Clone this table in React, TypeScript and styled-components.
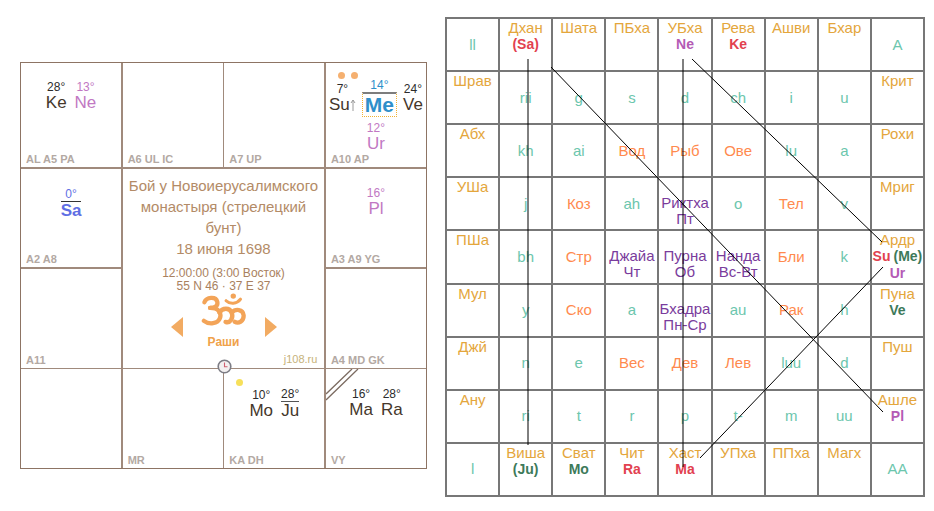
import React from "react";
import styled, { createGlobalStyle } from "styled-components";

const GlobalStyle = createGlobalStyle`
  body {
    margin: 0;
    background: #fff;
    font-family: "Liberation Sans", Arial, sans-serif;
  }
`;

const DARK = "#45372b";
const PINK_L = "#c178c3";
const BLUE_SA = "#5f6fe4";
const BLUE_ME = "#2f8fca";

const RED = "#e2414f";
const GREEN = "#3d7a5a";
const PINK = "#b45bb5";

const TONES: Record<string, string> = {
  letter: "#6cc6ad",
  sign: "#ff8a4e",
  tithi: "#7a3c9c",
  corner: "#6cc6ad",
};

const Page = styled.div`
  display: flex;
  align-items: flex-start;
  gap: 18px;
  width: 934px;
  height: 511px;
  box-sizing: border-box;
  padding: 17px 0 0 20px;
`;

/* ---------- left chart ---------- */

const Chart = styled.div`
  position: relative;
  margin-top: 45px;
  width: 407px;
  height: 407px;
  box-sizing: border-box;
  display: grid;
  grid-template-columns: repeat(4, 1fr);
  grid-template-rows: repeat(4, 1fr);
  gap: 1.5px;
  border: 1.5px solid #8d7464;
  background: #a08a7c;
`;

const House = styled.div<{ $top?: number }>`
  position: relative;
  background: #fff;
  display: flex;
  flex-direction: column;
  align-items: center;
  padding: ${(p) => p.$top ?? 18}px 4px 2px;
  min-width: 0;
`;

const HouseLabel = styled.div`
  margin-top: auto;
  align-self: flex-start;
  font-size: 11px;
  line-height: 12px;
  font-weight: bold;
  color: #b3a9a3;
  white-space: nowrap;
  padding-left: 1px;
`;

const PlanetRow = styled.div<{ $gap?: number; $mt?: number }>`
  display: flex;
  align-items: center;
  gap: ${(p) => p.$gap ?? 8}px;
  margin-top: ${(p) => p.$mt ?? 0}px;
`;

const PlanetBox = styled.div`
  display: flex;
  flex-direction: column;
  align-items: center;
`;

const Deg = styled.span<{ $color: string }>`
  font-size: 12px;
  line-height: 13px;
  color: ${(p) => p.$color};
`;

const Name = styled.span<{ $color: string; $line?: string }>`
  display: flex;
  align-items: center;
  font-size: 17px;
  line-height: 18px;
  color: ${(p) => p.$color};
  border-top: ${(p) => (p.$line ? `1.5px solid ${p.$line}` : "none")};
`;

const BoldName = styled(Name)`
  font-weight: bold;
`;

const MeBox = styled.span`
  font-size: 21px;
  line-height: 22px;
  font-weight: bold;
  color: ${BLUE_ME};
  padding: 0 2px;
  border: 1.5px dotted #f2b233;
  border-top: 2px solid #7d7d7d;
`;

const Dots = styled.div`
  position: absolute;
  left: 12px;
  top: 9px;
  display: flex;
  gap: 6px;
`;

const Dot = styled.span<{ $color: string }>`
  width: 7px;
  height: 7px;
  border-radius: 50%;
  background: ${(p) => p.$color};
`;

const SunDot = styled(Dot)`
  position: absolute;
  left: 12px;
  top: 10px;
`;

const Slash = styled.svg`
  position: absolute;
  left: 0;
  top: 0;
`;

const ClockMark = styled.svg`
  position: absolute;
  left: 196px;
  top: 296px;
`;

const Center = styled.div`
  grid-column: 2 / span 2;
  grid-row: 2 / span 2;
  background: #fff;
  display: flex;
  flex-direction: column;
  align-items: center;
  padding: 6px 6px 3px;
  color: #b38b67;
  text-align: center;
`;

const Title = styled.div`
  font-size: 15px;
  line-height: 21.3px;
`;

const Meta = styled.div`
  margin-top: 7px;
  font-size: 12px;
  line-height: 13px;
  color: #a98160;
`;

const OmRow = styled.div`
  display: flex;
  align-items: flex-start;
  gap: 16px;
  height: 33px;
`;

const Arrowhead = styled.span<{ $dir: "left" | "right" }>`
  margin-top: 24px;
  width: 0;
  height: 0;
  border-top: 10px solid transparent;
  border-bottom: 10px solid transparent;
  ${(p) =>
    p.$dir === "left"
      ? "border-right: 12px solid #f2ab62;"
      : "border-left: 12px solid #f2ab62;"}
`;

const Rashi = styled.div`
  margin-top: 9px;
  font-size: 12px;
  line-height: 14px;
  font-weight: bold;
  color: #f0a24a;
`;

const Site = styled.div`
  margin-top: auto;
  align-self: flex-end;
  margin-right: 1px;
  font-size: 11px;
  line-height: 12px;
  color: #c6b27a;
`;

type PlanetProps = {
  deg: string;
  name: string;
  color?: string;
  degColor?: string;
  line?: string;
  bold?: boolean;
  rising?: boolean;
};

const Planet = ({ deg, name, color = DARK, degColor, line, bold, rising }: PlanetProps) => {
  const N = bold ? BoldName : Name;
  return (
    <PlanetBox>
      <Deg $color={degColor ?? (color === DARK ? "#2c2c2c" : color)}>{deg}</Deg>
      <N $color={color} $line={line}>
        {name}
        {rising && (
          <svg width="6" height="14" viewBox="0 0 6 14">
            <path d="M3 13V2M1 5l2-3 2 3" stroke="#9a9a9a" strokeWidth="1" fill="none" />
          </svg>
        )}
      </N>
    </PlanetBox>
  );
};

const Om = () => (
  <svg width="50" height="33" viewBox="0 0 48 32">
    <g fill="none" stroke="#f3a458" strokeWidth="4.2" strokeLinecap="round">
      <path d="M5 9C7 4 16 3 17.5 8.5C18.5 12.5 15 14.5 10.5 14.5" />
      <path d="M10.5 14.5C18.5 14.5 22 19 20 24.5C18 30 9.5 31 4.5 27" />
      <path d="M19.5 19C22.5 14 29.5 14 31.5 19C33.5 25 29.5 29.5 25.5 28" />
      <path d="M31.5 19C35 15 42.5 15.5 43 21.5C43.5 27.5 38 30 34.5 28" />
      <path d="M26 7.5C29.5 11 36.5 11 40 6" strokeWidth="3" />
    </g>
    <circle cx="33" cy="3" r="2.6" fill="#f3a458" />
  </svg>
);

/* ---------- right grid ---------- */

type Mark = { text: string; color: string };
type Cell =
  | { kind: "nak"; name: string; marks: Mark[][] }
  | { kind: "in"; tone: string; lines: string[] };

const m = (text: string, color: string): Mark => ({ text, color });
const nak = (name: string, ...marks: Mark[][]): Cell => ({ kind: "nak", name, marks });
const L = (s: string): Cell => ({ kind: "in", tone: "letter", lines: [s] });
const S = (s: string): Cell => ({ kind: "in", tone: "sign", lines: [s] });
const T = (a: string, b: string): Cell => ({ kind: "in", tone: "tithi", lines: [a, b] });
const C = (s: string): Cell => ({ kind: "in", tone: "corner", lines: [s] });

const rows: Cell[][] = [
  [C("ll"), nak("Дхан", [m("(Sa)", RED)]), nak("Шата"), nak("ПБха"), nak("УБха", [m("Ne", PINK)]), nak("Рева", [m("Ke", RED)]), nak("Ашви"), nak("Бхар"), C("A")],
  [nak("Шрав"), L("rii"), L("g"), L("s"), L("d"), L("ch"), L("i"), L("u"), nak("Крит")],
  [nak("Абх"), L("kh"), L("ai"), S("Вод"), S("Рыб"), S("Ове"), L("lu"), L("a"), nak("Рохи")],
  [nak("УШа"), L("j"), S("Коз"), L("ah"), T("Риктха", "Пт"), L("o"), S("Тел"), L("v"), nak("Мриг")],
  [nak("ПШа"), L("bh"), S("Стр"), T("Джайа", "Чт"), T("Пурна", "Об"), T("Нанда", "Вс-Вт"), S("Бли"), L("k"), nak("Ардр", [m("Su", RED), m("(Me)", GREEN)], [m("Ur", PINK)])],
  [nak("Мул"), L("y"), S("Ско"), L("a"), T("Бхадра", "Пн-Ср"), L("au"), S("Рак"), L("h"), nak("Пуна", [m("Ve", GREEN)])],
  [nak("Джй"), L("n"), L("e"), S("Вес"), S("Дев"), S("Лев"), L("luu"), L("d"), nak("Пуш")],
  [nak("Ану"), L("ri"), L("t"), L("r"), L("p"), L("t-"), L("m"), L("uu"), nak("Ашле", [m("Pl", PINK)])],
  [C("l"), nak("Виша", [m("(Ju)", GREEN)]), nak("Сват", [m("Mo", GREEN)]), nak("Чит", [m("Ra", RED)]), nak("Хаст", [m("Ma", RED)]), nak("УПха"), nak("ППха"), nak("Магх"), C("AA")],
];

const links = [
  [83, 42, 83, 428],
  [238, 42, 238, 450],
  [106, 50, 438, 395],
  [247, 42, 437, 225],
  [438, 250, 255, 441],
];

const Board = styled.div`
  position: relative;
  width: 480px;
  height: 480px;
`;

const Grid = styled.div`
  display: grid;
  grid-template-columns: repeat(9, 1fr);
  grid-template-rows: repeat(9, 1fr);
  gap: 2px;
  width: 100%;
  height: 100%;
  box-sizing: border-box;
  border: 2px solid #777;
  background: #777;
`;

const GCell = styled.div<{ $center?: boolean }>`
  background: #fff;
  display: flex;
  flex-direction: column;
  align-items: center;
  justify-content: ${(p) => (p.$center ? "center" : "flex-start")};
  font-size: 15px;
  line-height: 17px;
  text-align: center;
  overflow: hidden;
`;

const NakName = styled.div`
  color: #e4a63c;
`;

const MarkLine = styled.div`
  display: flex;
  gap: 3px;
  font-size: 14px;
  line-height: 17px;
  font-weight: bold;
`;

const InText = styled.div<{ $tone: string; $two?: boolean }>`
  color: ${(p) => TONES[p.$tone]};
  line-height: 16px;
  padding-top: ${(p) => (p.$two ? 14 : 0)}px;
`;

const Links = styled.svg`
  position: absolute;
  left: 0;
  top: 0;
  pointer-events: none;
`;

const GridCell = ({ cell }: { cell: Cell }) => {
  if (cell.kind === "nak") {
    return (
      <GCell>
        <NakName>{cell.name}</NakName>
        {cell.marks.map((line, i) => (
          <MarkLine key={i}>
            {line.map((mk) => (
              <span key={mk.text} style={{ color: mk.color }}>
                {mk.text}
              </span>
            ))}
          </MarkLine>
        ))}
      </GCell>
    );
  }
  return (
    <GCell $center>
      <InText $tone={cell.tone} $two={cell.lines.length > 1}>
        {cell.lines.map((l) => (
          <div key={l}>{l}</div>
        ))}
      </InText>
    </GCell>
  );
};

export default function App() {
  return (
    <>
      <GlobalStyle />
      <Page>
        <Chart>
          <House $top={18}>
            <PlanetRow $gap={8}>
              <Planet deg="28°" name="Ke" />
              <Planet deg="13°" name="Ne" color={PINK_L} />
            </PlanetRow>
            <HouseLabel>AL A5 PA</HouseLabel>
          </House>
          <House>
            <HouseLabel>A6 UL IC</HouseLabel>
          </House>
          <House>
            <HouseLabel>A7 UP</HouseLabel>
          </House>
          <House $top={16}>
            <Dots>
              <Dot $color="#f5b070" />
              <Dot $color="#f5b070" />
            </Dots>
            <PlanetRow $gap={6}>
              <Planet deg="7°" name="Su" rising />
              <PlanetBox>
                <Deg $color={BLUE_ME}>14°</Deg>
                <MeBox>Me</MeBox>
              </PlanetBox>
              <Planet deg="24°" name="Ve" />
            </PlanetRow>
            <PlanetRow $mt={5}>
              <Planet deg="12°" name="Ur" color={PINK_L} />
            </PlanetRow>
            <HouseLabel>A10 AP</HouseLabel>
          </House>

          <House $top={19}>
            <Planet deg="0°" name="Sa" color={BLUE_SA} line="#333" bold />
            <HouseLabel>A2 A8</HouseLabel>
          </House>
          <Center>
            <Title>
              Бой у Новоиерусалимского
              <br />
              монастыря (стрелецкий
              <br />
              бунт)
              <br />
              18 июня 1698
            </Title>
            <Meta>
              12:00:00 (3:00 Восток)
              <br />
              55 N 46 · 37 E 37
            </Meta>
            <OmRow>
              <Arrowhead $dir="left" />
              <Om />
              <Arrowhead $dir="right" />
            </OmRow>
            <Rashi>Раши</Rashi>
            <Site>j108.ru</Site>
          </Center>
          <House $top={18}>
            <Planet deg="16°" name="Pl" color={PINK_L} />
            <HouseLabel>A3 A9 YG</HouseLabel>
          </House>

          <House>
            <HouseLabel>A11</HouseLabel>
          </House>
          <House>
            <HouseLabel>A4 MD GK</HouseLabel>
          </House>

          <House />
          <House>
            <HouseLabel>MR</HouseLabel>
          </House>
          <House $top={19}>
            <SunDot $color="#f7e05a" />
            <PlanetRow $gap={8}>
              <Planet deg="10°" name="Mo" />
              <Planet deg="28°" name="Ju" line="#555" />
            </PlanetRow>
            <HouseLabel>KA DH</HouseLabel>
          </House>
          <House $top={19}>
            <Slash width="34" height="34" viewBox="0 0 34 34">
              <path d="M0 25L26 0M0 31L32 0" stroke="#7c6c62" strokeWidth="1.3" fill="none" />
            </Slash>
            <PlanetRow $gap={8}>
              <Planet deg="16°" name="Ma" />
              <Planet deg="28°" name="Ra" />
            </PlanetRow>
            <HouseLabel>VY</HouseLabel>
          </House>

          <ClockMark width="15" height="15" viewBox="0 0 15 15">
            <circle cx="7.5" cy="7.5" r="6.3" fill="#f3f0f0" stroke="#7d7d85" strokeWidth="1.6" />
            <path d="M7.5 3.5V7.8H10.5" stroke="#d06070" strokeWidth="1.1" fill="none" />
          </ClockMark>
        </Chart>

        <Board>
          <Grid>
            {rows.flat().map((cell, i) => (
              <GridCell key={i} cell={cell} />
            ))}
          </Grid>
          <Links width="480" height="480" viewBox="0 0 480 480">
            {links.map(([x1, y1, x2, y2], i) => (
              <line key={i} x1={x1} y1={y1} x2={x2} y2={y2} stroke="#000" strokeWidth="1" />
            ))}
          </Links>
        </Board>
      </Page>
    </>
  );
}
